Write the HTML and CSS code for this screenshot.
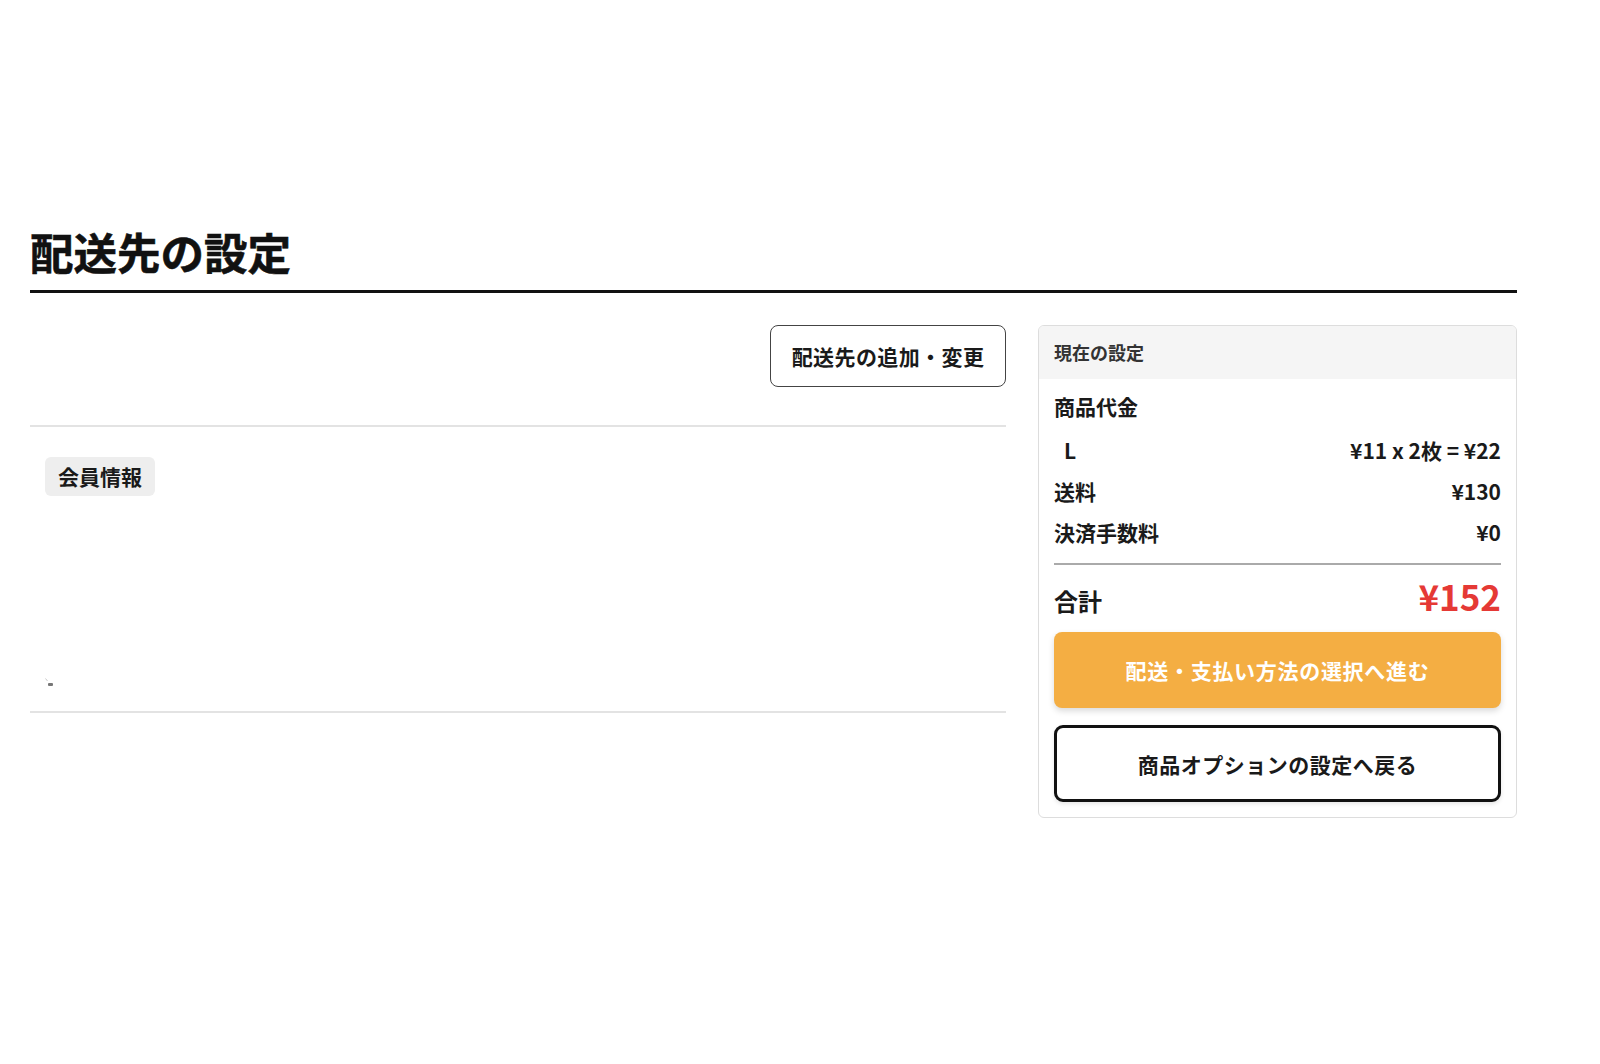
FILE: index.html
```html
<!DOCTYPE html>
<html lang="ja">
<head>
  <meta charset="UTF-8" />
  <meta name="viewport" content="width=device-width, initial-scale=1.0"/>
  <title>配送先の設定</title>
  <link rel="stylesheet" href="styles.css">
</head>
<body>
  <div class="page">
    <h1 class="page-title">配送先の設定</h1>

    <div class="content">
      <div class="main">
        <div class="toolbar">
          <button class="btn-edit" type="button">配送先の追加・変更</button>
        </div>

        <div class="member">
          <span class="badge">会員情報</span>
          <div class="member-body">
            <svg class="mark" width="10" height="10" viewBox="0 0 10 10">
              <line x1="0.5" y1="0.5" x2="2.5" y2="3" stroke="#bbb" stroke-width="0.8"/>
              <rect x="3" y="5" width="5" height="3" rx="1" fill="#777"/>
            </svg>
          </div>
        </div>
      </div>

      <aside class="summary">
        <div class="summary-head">現在の設定</div>
        <div class="summary-body">
          <div class="row row-title">商品代金</div>
          <div class="row row-item">
            <span>L</span>
            <span>¥11 x 2枚 = ¥22</span>
          </div>
          <div class="row">
            <span>送料</span>
            <span>¥130</span>
          </div>
          <div class="row">
            <span>決済手数料</span>
            <span>¥0</span>
          </div>

          <div class="total">
            <span class="total-label">合計</span>
            <span class="total-price">¥152</span>
          </div>

          <button class="btn-next" type="button">配送・支払い方法の選択へ進む</button>
          <button class="btn-back" type="button">商品オプションの設定へ戻る</button>
        </div>
      </aside>
    </div>
  </div>
</body>
</html>
```

FILE: styles.css
```css
body {
  margin: 0;
  padding: 0;
  background-color: #fff;
  color: #1a1a1a;
  font-family: "Noto Sans CJK JP", "Noto Sans", sans-serif;
}
button {
  font-family: inherit;
  cursor: pointer;
}
.page {
  width: 1487px;
  margin-left: 30px;
  padding-top: 225px;
}
.page-title {
  margin: 0;
  font-size: 43.5px;
  line-height: 53px;
  font-weight: 700;
  color: #111;
  padding-bottom: 12px;
  border-bottom: 3px solid #111;
  -webkit-text-stroke: 0.6px #111;
}
.content {
  display: flex;
  gap: 32px;
  margin-top: 32px;
  align-items: flex-start;
}
.main {
  width: 976px;
}
.toolbar {
  display: flex;
  justify-content: flex-end;
  padding-bottom: 38px;
  border-bottom: 2px solid #e3e3e3;
}
.btn-edit {
  width: 236px;
  height: 62px;
  background-color: #fff;
  border: 1.5px solid #444;
  border-radius: 8px;
  font-size: 21px;
  font-weight: 700;
  letter-spacing: 0.4px;
  color: #1a1a1a;
}
.member {
  padding: 30px 15px 0;
  border-bottom: 2px solid #e3e3e3;
}
.badge {
  display: inline-block;
  height: 39px;
  line-height: 39px;
  padding: 0 13px;
  background-color: #eee;
  border-radius: 6px;
  font-size: 21px;
  font-weight: 700;
  color: #1a1a1a;
  vertical-align: top;
}
.member-body {
  padding: 182px 0 23px;
}
.mark {
  display: block;
}
.summary {
  width: 479px;
  box-sizing: border-box;
  border: 1px solid #ddd;
  border-radius: 6px;
  overflow: hidden;
}
.summary-head {
  height: 53px;
  line-height: 53px;
  padding: 0 15px;
  background-color: #f5f5f5;
  font-size: 18px;
  font-weight: 700;
  color: #333;
}
.summary-body {
  padding: 7px 15px 15px;
}
.row {
  display: flex;
  justify-content: space-between;
  height: 41px;
  line-height: 41px;
  font-size: 21px;
  font-weight: 700;
  color: #1a1a1a;
}
.row-item {
  margin-top: 3px;
  padding-left: 10px;
}
.total {
  display: flex;
  justify-content: space-between;
  align-items: baseline;
  margin-top: 10px;
  padding-top: 10px;
  border-top: 2px solid #aaa;
}
.total-label {
  font-size: 24px;
  font-weight: 700;
  line-height: 1.2;
}
.total-price {
  font-size: 35px;
  font-weight: 700;
  line-height: 1.2;
  color: #e53935;
}
.btn-next {
  display: block;
  width: 100%;
  height: 76px;
  margin-top: 15px;
  border: none;
  border-radius: 8px;
  background-color: #f4ae43;
  color: #fff;
  font-size: 21px;
  font-weight: 700;
  letter-spacing: 0.7px;
  box-shadow: 0 3px 6px rgba(0, 0, 0, 0.15);
}
.btn-back {
  display: block;
  width: 100%;
  height: 77px;
  margin-top: 17px;
  background-color: #fff;
  border: 3px solid #111;
  border-radius: 9px;
  color: #1a1a1a;
  font-size: 21px;
  font-weight: 700;
  letter-spacing: 0.5px;
  box-shadow: 0 2px 4px rgba(0, 0, 0, 0.1);
}
```
